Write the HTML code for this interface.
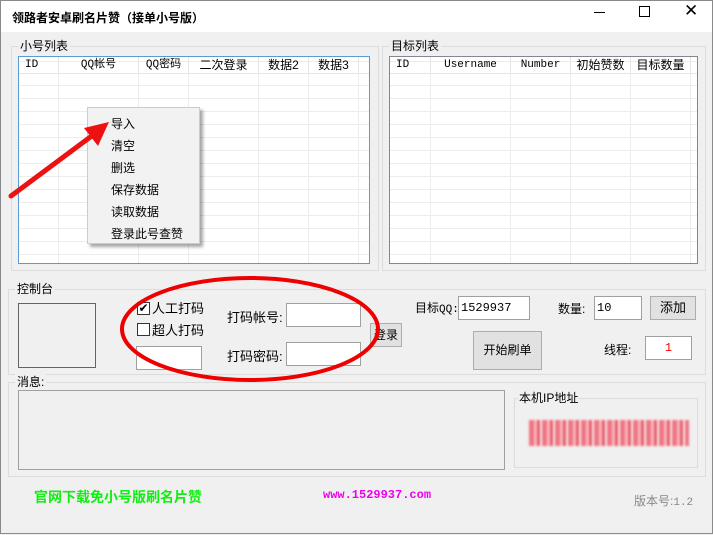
<!DOCTYPE html>
<html><head><meta charset="utf-8"><style>
*{margin:0;padding:0;box-sizing:border-box}
body{width:713px;height:534px;background:#f0f0f0;font-family:"Liberation Sans","Noto Sans CJK SC",sans-serif;font-size:12px;color:#000;position:relative;overflow:hidden;border:1px solid #8a8a8a}
.a{position:absolute;white-space:nowrap}
.title{left:0;top:0;width:711px;height:31px;background:#fff}
.grp{position:absolute;border:1px solid #dcdcdc}
.lg{position:absolute;background:#f0f0f0;padding:0 2px;top:-9px;left:8px;line-height:16px}
.inp{position:absolute;background:#fff;border:1px solid #a0a0a0;font-size:12px;line-height:22px;padding-left:2px}
.btn{position:absolute;background:#e1e1e1;border:1px solid #adadad;text-align:center}
.list{position:absolute;background:#fff;overflow:hidden}
.hd{position:absolute;top:0;height:16px;line-height:16px;text-align:center;border-right:1px solid #e5e5e5;font-size:12px}
.mono{font-family:"Liberation Mono","Noto Sans CJK SC",monospace;font-size:11px}
.inp.mono{font-size:12px}
</style></head><body>
<div class="a title"></div>
<div class="a" style="left:11px;top:8px;font-weight:bold;font-size:12px">领路者安卓刷名片赞（接单小号版）</div>
<div class="a" style="left:593px;top:11px;width:11px;border-top:1px solid #000"></div>
<div class="a" style="left:638px;top:5px;width:11px;height:11px;border:1px solid #000"></div>
<div class="a" style="left:683px;top:0px;font-size:17px">✕</div>

<div class="grp" style="left:10px;top:45px;width:368px;height:225px"><span class="lg" style="left:6px">小号列表</span></div>
<div class="list" style="left:17px;top:55px;width:352px;height:208px;border:1px solid #5b9bd5;
background-image:repeating-linear-gradient(#fff 0 12px,#ececec 12px 13px);background-position:0 16px">
<div class="hd mono" style="left:0;width:40px;text-align:left;padding-left:6px">ID</div>
<div class="hd mono" style="left:40px;width:80px">QQ帐号</div>
<div class="hd mono" style="left:120px;width:50px">QQ密码</div>
<div class="hd" style="left:170px;width:70px">二次登录</div>
<div class="hd" style="left:240px;width:50px">数据2</div>
<div class="hd" style="left:290px;width:50px">数据3</div>
<div class="a" style="left:0;top:16px;width:352px;height:1px;background:#e5e5e5"></div>
<div class="a" style="left:39px;top:16px;width:1px;height:200px;background:#ececec"></div>
<div class="a" style="left:119px;top:16px;width:1px;height:200px;background:#ececec"></div>
<div class="a" style="left:169px;top:16px;width:1px;height:200px;background:#ececec"></div>
<div class="a" style="left:239px;top:16px;width:1px;height:200px;background:#ececec"></div>
<div class="a" style="left:289px;top:16px;width:1px;height:200px;background:#ececec"></div>
<div class="a" style="left:339px;top:16px;width:1px;height:200px;background:#ececec"></div>
</div>

<div class="grp" style="left:381px;top:45px;width:324px;height:225px"><span class="lg" style="left:6px">目标列表</span></div>
<div class="list" style="left:388px;top:55px;width:309px;height:208px;border:1px solid #828790;
background-image:repeating-linear-gradient(#fff 0 12px,#ececec 12px 13px);background-position:0 16px">
<div class="hd mono" style="left:0;width:41px;text-align:left;padding-left:6px">ID</div>
<div class="hd mono" style="left:41px;width:80px">Username</div>
<div class="hd mono" style="left:121px;width:60px">Number</div>
<div class="hd" style="left:181px;width:60px">初始赞数</div>
<div class="hd" style="left:241px;width:60px">目标数量</div>
<div class="a" style="left:0;top:16px;width:309px;height:1px;background:#e5e5e5"></div>
<div class="a" style="left:40px;top:16px;width:1px;height:200px;background:#ececec"></div>
<div class="a" style="left:120px;top:16px;width:1px;height:200px;background:#ececec"></div>
<div class="a" style="left:180px;top:16px;width:1px;height:200px;background:#ececec"></div>
<div class="a" style="left:240px;top:16px;width:1px;height:200px;background:#ececec"></div>
<div class="a" style="left:300px;top:16px;width:1px;height:200px;background:#ececec"></div>
</div>

<div class="a" style="left:86px;top:106px;width:113px;height:137px;background:#f2f2f2;border:1px solid #ccc;box-shadow:3px 3px 3px rgba(0,0,0,.35)">
<div class="a" style="left:23px;top:5px;line-height:22px;white-space:normal">导入<br>清空<br>删选<br>保存数据<br>读取数据<br>登录此号查赞</div>
</div>

<div class="grp" style="left:7px;top:288px;width:698px;height:86px"><span class="lg" style="left:6px">控制台</span></div>
<div class="a" style="left:17px;top:302px;width:78px;height:65px;border:1px solid #646464"></div>
<div class="a" style="left:136px;top:301px;width:13px;height:13px;border:1px solid #333;background:#fff;font-size:12px;line-height:11px;text-align:center">✔</div>
<div class="a" style="left:151px;top:297px;font-size:13px">人工打码</div>
<div class="a" style="left:136px;top:322px;width:13px;height:13px;border:1px solid #333;background:#fff"></div>
<div class="a" style="left:151px;top:319px;font-size:13px">超人打码</div>
<div class="inp" style="left:135px;top:345px;width:66px;height:24px"></div>
<div class="a" style="left:226px;top:306px;font-size:13px">打码帐号:</div>
<div class="inp" style="left:285px;top:302px;width:75px;height:24px"></div>
<div class="a" style="left:226px;top:345px;font-size:13px">打码密码:</div>
<div class="inp" style="left:285px;top:341px;width:75px;height:24px"></div>
<div class="btn" style="left:369px;top:322px;width:32px;height:24px;line-height:22px;text-align:right;padding-right:3px">登录</div>
<div class="a" style="left:414px;top:298px"><span>目标</span><span class="mono">QQ:</span></div>
<div class="inp mono" style="left:457px;top:295px;width:72px;height:24px">1529937</div>
<div class="a" style="left:557px;top:299px">数量:</div>
<div class="inp mono" style="left:593px;top:295px;width:48px;height:24px">10</div>
<div class="btn" style="left:649px;top:295px;width:46px;height:24px;line-height:22px;font-size:13px">添加</div>
<div class="btn" style="left:472px;top:330px;width:69px;height:39px;line-height:37px">开始刷单</div>
<div class="a" style="left:603px;top:340px">线程:</div>
<div class="inp mono" style="left:644px;top:335px;width:47px;height:24px;color:#f00;text-align:center;padding-left:0">1</div>

<div class="grp" style="left:7px;top:381px;width:698px;height:95px"><span class="lg" style="left:6px">消息:</span></div>
<div class="a" style="left:17px;top:389px;width:487px;height:80px;border:1px solid #a0a0a0"></div>
<div class="grp" style="left:513px;top:397px;width:184px;height:70px"><span class="lg" style="left:3px;padding:0 1px">本机IP地址</span></div>
<div class="a" style="left:528px;top:419px;width:160px;height:26px;background:repeating-linear-gradient(90deg,#f06070 0 5px,#f8b0b8 5px 8px,#e84050 8px 11px,#f0f0f0 11px 13px);filter:blur(1px);opacity:.85"></div>

<div class="a" style="left:33px;top:486px;color:#11ee11;font-size:14px;font-weight:bold">官网下载免小号版刷名片赞</div>
<div class="a mono" style="left:322px;top:487px;color:#ee00ee;font-size:12px;font-weight:bold">www.1529937.com</div>
<div class="a" style="left:633px;top:491px;color:#888">版本号:<span class="mono">1.2</span></div>

<svg class="a" style="left:0;top:0" width="713" height="534">
<ellipse cx="249" cy="328" rx="128" ry="51" fill="none" stroke="#ee0000" stroke-width="4"/>
<line x1="10" y1="195" x2="92" y2="134" stroke="#ee1111" stroke-width="5" stroke-linecap="round"/>
<polygon points="108,121 83,127 97,145" fill="#ee1111"/>
</svg>
</body></html>
